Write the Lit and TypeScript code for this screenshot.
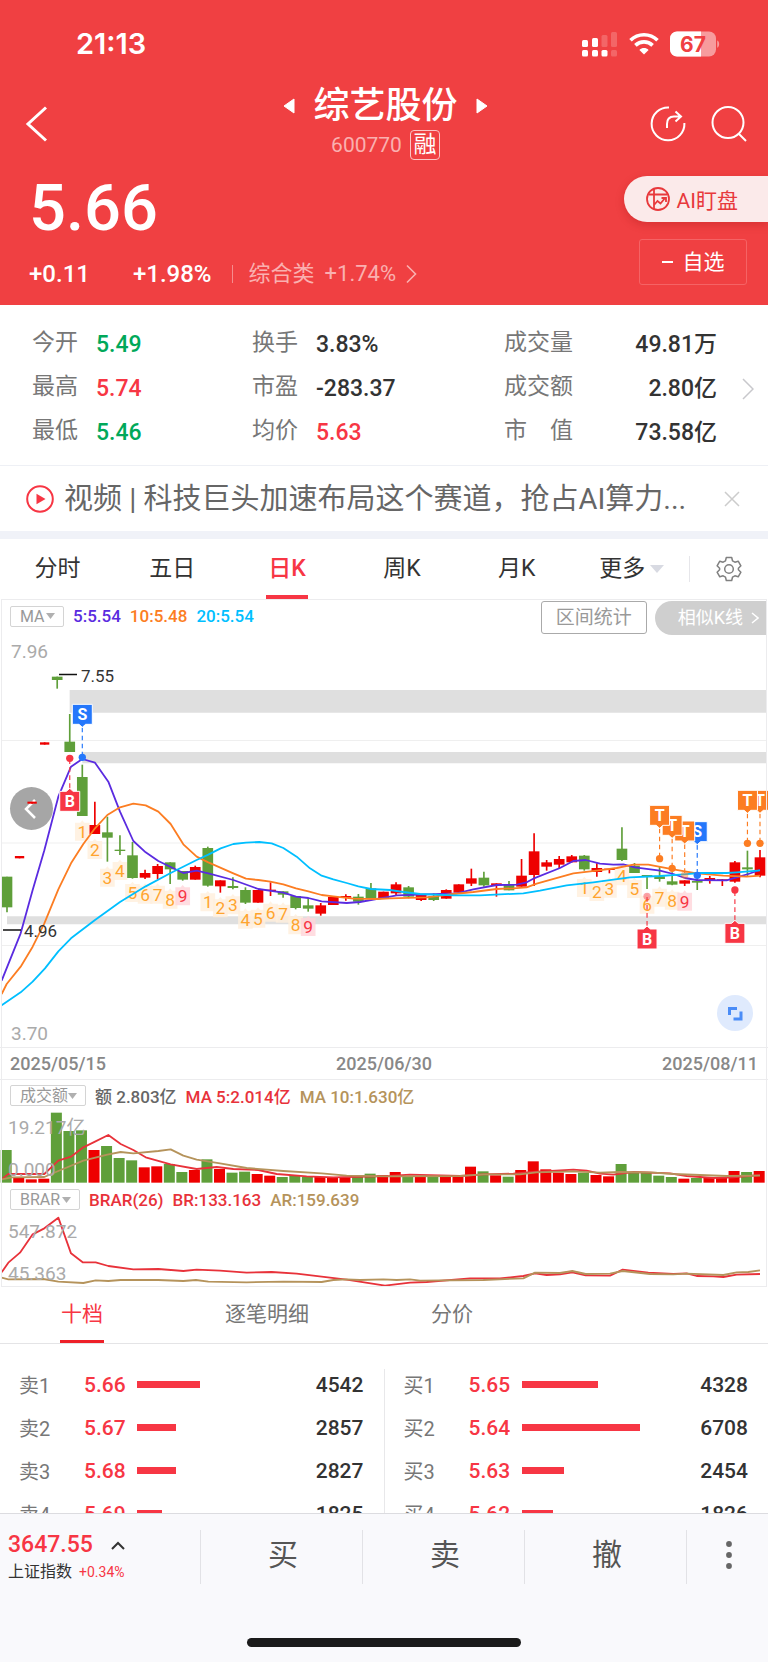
import { LitElement, html, svg, css } from "lit";
import { customElement, state } from "lit/decorators.js";
import { classMap } from "lit/directives/class-map.js";
import { styleMap } from "lit/directives/style-map.js";

type Dir = "r" | "g";
type Candle = [Dir, number, number, number, number];
type Point = [number, number];

/* Plot units are a third of a CSS pixel; candles sit STEP units apart. */
const FIRST = 21;
const STEP = 37.65;
const cx = (i: number) => FIRST + STEP * i;

/* direction, body top, body bottom, high, low */
const CANDLES: Candle[] = [
  ["g", 290, 382, 290, 397], ["r", 228, 235, 228, 235], ["r", 65, 71, 65, 71], ["r", -113, -106, -113, -106],
  ["g", -310, -300, -310, -274], ["g", -115, -84, -198, -84], ["g", -9, 108, -46, 108], ["r", 135, 162, 65, 162],
  ["g", 157, 173, 110, 245], ["g", 209, 213, 166, 225], ["g", 226, 294, 186, 296], ["r", 279, 293, 269, 297],
  ["r", 258, 282, 252, 297], ["g", 247, 268, 247, 312], ["g", 273, 299, 273, 302], ["r", 261, 299, 257, 299],
  ["g", 204, 317, 200, 320], ["r", 301, 319, 301, 338], ["g", 318, 324, 292, 328], ["g", 330, 368, 322, 372],
  ["r", 330, 368, 330, 368], ["r", 329, 333, 307, 348], ["g", 334, 344, 334, 353], ["g", 348, 384, 348, 388],
  ["g", 376, 386, 355, 395], ["r", 376, 401, 369, 407], ["r", 351, 375, 351, 375], ["r", 348, 353, 343, 362],
  ["g", 350, 365, 342, 374], ["g", 325, 354, 309, 354], ["r", 335, 354, 335, 354], ["r", 313, 340, 307, 345],
  ["g", 322, 350, 318, 355], ["r", 344, 360, 342, 363], ["g", 348, 360, 340, 363], ["r", 330, 356, 328, 356],
  ["r", 313, 338, 313, 338], ["r", 295, 311, 266, 318], ["g", 293, 316, 275, 320], ["r", 310, 316, 310, 350],
  ["g", 313, 331, 303, 331], ["r", 287, 320, 237, 320], ["r", 214, 285, 160, 318], ["r", 247, 260, 240, 272],
  ["r", 237, 254, 228, 264], ["r", 229, 247, 225, 247], ["g", 227, 268, 225, 272], ["r", 264, 276, 250, 290],
  ["r", 266, 270, 266, 280], ["g", 206, 240, 142, 243], ["g", 257, 279, 249, 279], ["g", 285, 289, 285, 327],
  ["g", 289, 297, 260, 305], ["g", 304, 314, 277, 316], ["r", 301, 311, 301, 318], ["g", 303, 308, 290, 330],
  ["r", 294, 303, 288, 311], ["r", 298, 302, 298, 318], ["r", 247, 305, 243, 308], ["g", 262, 268, 212, 290],
  ["r", 232, 287, 210, 292],
];

const MA5: Point[] = [[5,602],[62,460],[98,330],[133,211],[175,50],[213,-40],[247,-63],[285,-52],[325,5],[360,95],[400,183],[437,217],[475,243],[512,261],[550,279],[590,272],[625,280],[700,300],[775,327],[850,338],[888,350],[925,354],[965,364],[1040,369],[1080,366],[1170,350],[1190,346],[1280,343],[1370,340],[1420,328],[1490,315],[1550,314],[1580,307],[1600,296],[1680,264],[1720,243],[1757,240],[1800,251],[1840,254],[1870,253],[1905,262],[1980,272],[2020,282],[2055,294],[2090,300],[2180,301],[2210,292],[2245,282],[2280,270]];
const MA10: Point[] = [[5,642],[20,612],[62,560],[98,500],[133,430],[175,328],[213,250],[250,192],[285,145],[322,105],[360,82],[400,71],[437,76],[475,95],[512,132],[550,193],[590,230],[625,247],[700,280],[738,296],[775,300],[811,305],[850,313],[888,325],[925,334],[965,345],[1000,349],[1060,356],[1130,357],[1170,355],[1280,352],[1360,342],[1420,336],[1490,327],[1540,325],[1580,322],[1610,311],[1720,280],[1790,272],[1850,264],[1900,254],[1945,254],[2020,268],[2090,280],[2170,287],[2240,290],[2280,287]];
const MA20: Point[] = [[5,676],[62,637],[98,605],[135,565],[175,514],[213,475],[285,420],[360,366],[437,319],[512,279],[590,240],[625,224],[662,205],[700,192],[738,188],[778,186],[815,190],[850,204],[890,230],[930,265],[965,287],[1000,298],[1040,309],[1075,319],[1113,327],[1170,330],[1210,336],[1260,342],[1360,346],[1440,346],[1570,340],[1620,332],[1700,316],[1780,307],[1840,299],[1890,292],[1980,288],[2050,283],[2100,279],[2180,279],[2210,277],[2280,271]];

/* candle index, count, centre y */
const COUNTS: [number, number, number][] = [
  [6,1,154],[7,2,209],[8,3,292],[9,4,272],[10,5,338],[11,6,343],[12,7,343],[13,8,358],[14,9,348],
  [16,1,366],[17,2,384],[18,3,375],[19,4,418],[20,5,415],[21,6,397],[22,7,400],[23,8,435],[24,9,440],
  [46,1,323],[47,2,335],[48,3,325],[49,4,288],[50,5,326],[51,6,373],[52,7,352],[53,8,361],[54,9,364],
];

/* candle index, letter, tag centre, dot centre */
const MARKS: [number, "B" | "S" | "T", number, number][] = [
  [60,"T",61,190],[59,"T",61,190],[58,"B",460,330],[55,"S",155,286],[54,"T",153,285],[53,"T",136,265],
  [52,"T",106,236],[51,"B",477,349],[6,"S",-197,-68],[5,"B",64,-65],
];
const MARK_COLOR = { B: "#f73644", S: "#2477fb", T: "#fc7d22" };

const VOLUME_TOPS = [240,323,328,326,128,183,181,240,228,264,271,292,289,282,306,300,268,297,308,305,312,317,321,317,321,321,321,322,320,311,315,306,318,319,319,319,320,290,304,316,320,300,274,298,308,312,308,315,319,282,308,308,317,321,326,324,323,321,303,306,303];
const VMA5: Point[] = [[5,328],[25,312],[133,312],[175,272],[213,260],[250,232],[285,215],[325,195],[362,222],[400,240],[437,262],[512,283],[590,297],[650,291],[700,297],[775,300],[830,312],[920,319],[1000,322],[1170,318],[1230,314],[1380,318],[1450,313],[1540,311],[1600,306],[1720,299],[1760,302],[1800,311],[1840,314],[1900,306],[2010,310],[2060,318],[2140,324],[2200,322],[2280,315]];
const VMA10: Point[] = [[5,328],[35,322],[133,321],[175,303],[250,272],[322,254],[362,246],[400,250],[475,243],[512,238],[550,257],[590,269],[660,280],[740,294],[850,303],[965,310],[1040,317],[1170,319],[1380,318],[1450,313],[1560,313],[1610,307],[1720,304],[1800,308],[1860,306],[1950,307],[2020,312],[2180,318],[2280,317]];
const BR: Point[] = [[5,607],[25,578],[60,548],[98,493],[133,475],[175,443],[213,550],[248,577],[287,577],[325,588],[400,598],[475,597],[550,603],[590,599],[660,602],[740,608],[815,606],[890,611],[1040,629],[1155,647],[1230,638],[1280,636],[1410,625],[1500,625],[1570,618],[1605,610],[1640,615],[1680,613],[1717,607],[1757,616],[1830,617],[1868,599],[1945,608],[2020,612],[2060,610],[2090,618],[2140,619],[2170,621],[2210,614],[2280,612]];
const AR: Point[] = [[5,623],[25,628],[130,627],[175,635],[250,639],[287,631],[325,633],[362,630],[475,630],[550,633],[588,630],[625,635],[740,637],[850,635],[965,636],[1000,630],[1040,628],[1080,630],[1150,628],[1190,630],[1230,628],[1260,632],[1450,630],[1570,625],[1605,608],[1680,609],[1717,603],[1757,612],[1830,611],[1868,603],[1950,612],[2020,613],[2060,611],[2170,615],[2210,607],[2245,606],[2280,601]];

const RED = "#ee0000";
const GREEN = "#5f9f3a";
const line = (pts: Point[], color: string) =>
  svg`<polyline points=${pts.map((p) => p.join(",")).join(" ")} fill="none" stroke=${color} stroke-width="5.4" stroke-linejoin="round"/>`;

const base = css`
  :host {
    box-sizing: border-box;
    font-family: Roboto, "Noto Sans CJK SC", sans-serif;
    color: #333;
  }
  *, *::before, *::after { box-sizing: border-box; }
  button, select {
    font: inherit;
    color: inherit;
    background: none;
    border: 0;
    padding: 0;
    margin: 0;
  }
  svg { display: block; flex: none; }
  .num { font-weight: 500; }
  .red { color: #f73644; }
  .green { color: #00a85a; }
`;

@customElement("quote-header")
class QuoteHeader extends LitElement {
  static styles = [base, css`
    :host { display: block; background: #f04042; color: #fff; }
    .status { display: flex; align-items: center; justify-content: space-between; height: 60px; padding: 28px 48px 0 76px; }
    .time { font: 600 29px/32px Inter, sans-serif; }
    .signals { display: flex; align-items: center; gap: 11px; }
    .nav { display: grid; grid-template-columns: 1fr auto 1fr; align-items: end; padding: 26px 21px 0 24px; }
    .side { display: flex; gap: 25px; padding-bottom: 18px; }
    .end { justify-content: flex-end; }
    .name { display: flex; align-items: center; gap: 18px; margin: 0; font-size: 36px; font-weight: 500; line-height: 40px; }
    .center { display: flex; flex-direction: column; align-items: center; gap: 4px; }
    .code { display: flex; align-items: center; gap: 8px; font-size: 21px; line-height: 30px; color: #fab0b0; }
    .tag { width: 30px; height: 30px; border: 1px solid #fbc4c4; border-radius: 4px; color: #fff; font-size: 23px; line-height: 27px; text-align: center; }
    .body { display: flex; justify-content: space-between; padding: 14px 0 17px 29px; }
    .price { font-size: 65px; font-weight: 500; line-height: 68px; }
    .changes { display: flex; align-items: center; margin-top: 18px; font-size: 24px; line-height: 28px; }
    .pct { margin-left: 43px; }
    .sector { display: flex; align-items: center; gap: 10px; margin-left: 20px; padding-left: 17px; color: #fab0b0; font-size: 22px; text-decoration: none; background: linear-gradient(#f68c8d, #f68c8d) left center / 1px 18px no-repeat; }
    .actions { display: flex; flex-direction: column; align-items: flex-end; gap: 17px; padding-top: 2px; }
    .ai { display: flex; align-items: center; gap: 7px; height: 46px; padding: 0 30px 0 22px; border-radius: 23px 0 0 23px; background: #fbeaea; color: #e8393c; font-size: 21px; box-shadow: 0 3px 8px rgba(160, 20, 20, 0.3); }
    .watch { display: flex; align-items: center; justify-content: center; gap: 10px; width: 108px; height: 46px; margin-right: 21px; border: 1px solid #f56365; border-radius: 3px; font-size: 21px; line-height: 40px; }
    .minus { width: 11px; height: 2px; background: #fff; }
  `];

  render() {
    return html`
      <div class="status">
        <div class="time">21:13</div>
        <div class="signals">
          <svg width="36" height="26" viewBox="0 0 36 26" fill="#fff">
            <rect x="0" y="9" width="6" height="7" rx="1.5"/><rect x="10" y="7" width="6" height="9" rx="1.5"/>
            <rect x="19.500" y="4" width="6" height="12" rx="1.5" opacity=".2"/><rect x="29" y="1" width="6" height="15" rx="1.5" opacity=".2"/>
            <rect x="0" y="19" width="6" height="6.500" rx="1.5"/><rect x="10" y="19" width="6" height="6.500" rx="1.5"/>
            <rect x="19.500" y="19" width="6" height="6.500" rx="1.5"/><rect x="29" y="19" width="6" height="6.500" rx="1.5" opacity=".2"/>
          </svg>
          <svg width="30" height="24" viewBox="0 0 30 24" fill="none" stroke="#fff" stroke-width="3.600">
            <path d="M1.500 8.300C9 .8 21 .8 28.500 8.300"/><path d="M6.400 13.400c4.800-4.700 12.400-4.700 17.200 0"/>
            <path d="M10.400 17.900c2.600-2.400 6.600-2.400 9.200 0L15 22.600Z" fill="#fff" stroke="none"/>
          </svg>
          <svg width="50" height="26" viewBox="0 0 50 26">
            <rect x="0" y="0.500" width="46" height="25" rx="7" fill="#f79c9d"/>
            <path d="M7 .5h24v25H7a7 7 0 0 1-7-7v-11a7 7 0 0 1 7-7Z" fill="#fff"/>
            <path d="M47.200 9.500c2.600.8 2.600 6.400 0 7.200Z" fill="#f79c9d"/>
            <text x="23" y="20.500" text-anchor="middle" font-family="Inter, sans-serif" font-weight="700" font-size="21" fill="#f04042">67</text>
          </svg>
        </div>
      </div>
      <div class="nav">
        <div class="side">
          <button aria-label="返回"><svg width="26" height="36" viewBox="0 0 26 36" fill="none" stroke="#fff" stroke-width="3"><path d="M22 1.500 4 18l18 16.500"/></svg></button>
        </div>
        <div class="center">
          <h1 class="name">
            <svg width="12" height="16" viewBox="0 0 12 16"><path d="M11 1v14L1 8Z" fill="#fff" stroke="#fff" stroke-linejoin="round"/></svg>
            综艺股份
            <svg width="12" height="16" viewBox="0 0 12 16"><path d="M1 1v14l10-7Z" fill="#fff" stroke="#fff" stroke-linejoin="round"/></svg>
          </h1>
          <div class="code">600770 <span class="tag">融</span></div>
        </div>
        <div class="side end">
          <button aria-label="分享"><svg width="36" height="36" viewBox="0 0 36 36" fill="none" stroke="#fff" stroke-width="2"><path d="M19 1.500A16.400 16.400 0 1 0 34.400 17"/><path d="M17 22v-4c0-5 3-7.500 7-7.500h6M25.500 5.500l5.500 5-5.500 5"/></svg></button>
          <button aria-label="搜索"><svg width="36" height="36" viewBox="0 0 36 36" fill="none" stroke="#fff" stroke-width="2"><circle cx="17" cy="16.500" r="15.500"/><path d="m28 28 7 7"/></svg></button>
        </div>
      </div>
      <div class="body">
        <div>
          <div class="price">5.66</div>
          <div class="changes">
            <span class="num">+0.11</span><span class="num pct">+1.98%</span>
            <a class="sector" href="#sector">综合类 <span>+1.74%</span>
              <svg width="11" height="20" viewBox="0 0 11 20" fill="none" stroke="#fab0b0" stroke-width="1.600"><path d="m1 1.500 8.500 8.500L1 18.500"/></svg>
            </a>
          </div>
        </div>
        <div class="actions">
          <button class="ai">
            <svg width="24" height="24" viewBox="0 0 24 24" fill="none" stroke="#e8393c" stroke-width="1.800"><circle cx="12" cy="12" r="11"/><path d="M2.500 7.500h19M8 2v20M8 18l3.500-4 3 2.500 5-6M15.500 11h4.500v4"/></svg>
            AI盯盘
          </button>
          <button class="watch"><i class="minus"></i>自选</button>
        </div>
      </div>`;
  }
}

@customElement("quote-stats")
class QuoteStats extends LitElement {
  static styles = [base, css`
    :host { display: block; }
    .stats { display: flex; align-items: center; padding: 18px 14px 10px 32px; border-bottom: 1px solid #eef0f5; }
    .grid { flex: 1; display: grid; grid-template-columns: 220fr 252fr 213fr; grid-auto-rows: 44px; margin: 0; }
    .item { display: flex; gap: 18px; height: 44px; font-size: 23px; line-height: 44px; }
    .item:nth-child(3n) { justify-content: space-between; }
    dt { height: 40px; line-height: 40px; color: #777; white-space: pre; }
    dd { margin: 0; font-weight: 500; }
    .more { margin-left: 25px; }
    .news { display: flex; align-items: center; height: 65px; padding: 0 28px 0 26px; }
    .headline { flex: 1; min-width: 0; margin: 0 30px 0 10px; overflow: hidden; white-space: nowrap; text-overflow: ellipsis; color: #666; font-size: 29px; line-height: 64px; text-decoration: none; }
    .band { height: 8px; background: #f0f2f8; }
  `];

  rows: [string, string, string][] = [
    ["今开", "5.49", "green"], ["换手", "3.83%", ""], ["成交量", "49.81万", ""],
    ["最高", "5.74", "red"], ["市盈", "-283.37", ""], ["成交额", "2.80亿", ""],
    ["最低", "5.46", "green"], ["均价", "5.63", "red"], ["市　值", "73.58亿", ""],
  ];

  render() {
    return html`
      <div class="stats">
        <dl class="grid">
          ${this.rows.map(([k, v, c]) => html`<div class="item"><dt>${k}</dt><dd class=${c}>${v}</dd></div>`)}
        </dl>
        <button class="more" aria-label="更多指标"><svg width="12" height="22" viewBox="0 0 12 22" fill="none" stroke="#c8c8cc" stroke-width="1.500"><path d="m1 1 10 10L1 21"/></svg></button>
      </div>
      <div class="news">
        <svg width="28" height="28" viewBox="0 0 28 28"><circle cx="14" cy="14" r="12.800" fill="none" stroke="#f73644" stroke-width="2"/><path d="M10.500 8.800v10.400l9-5.200Z" fill="#f73644"/></svg>
        <a class="headline" href="#news">视频 | 科技巨头加速布局这个赛道，抢占AI算力...</a>
        <button aria-label="关闭"><svg width="16" height="16" viewBox="0 0 16 16" stroke="#ccc" stroke-width="1.500"><path d="m1 1 14 14M15 1 1 15"/></svg></button>
      </div>
      <div class="band"></div>`;
  }
}

@customElement("kline-panel")
class KlinePanel extends LitElement {
  static styles = [base, css`
    :host { display: block; }
    .tabs { display: flex; align-items: center; height: 60px; font-size: 23px; }
    .period { flex: 115; height: 60px; }
    .label { display: inline-block; height: 60px; line-height: 60px; padding: 0 2px; border-bottom: 4px solid transparent; }
    .on .label { color: #f73644; border-color: #f73644; font-weight: 500; }
    .extra { flex: 115; display: flex; align-items: center; justify-content: center; gap: 5px; height: 60px; line-height: 60px; }
    .gear { flex: 78; display: flex; justify-content: center; border-left: 1px solid #e6e6ea; }
    .chart { position: relative; }
    .chart::after { content: ""; position: absolute; inset: 0 1px; border: 1px solid #ececee; pointer-events: none; }
    .bar { display: flex; align-items: flex-start; justify-content: space-between; height: 37px; padding: 1px 1px 0 10px; }
    .legend { display: flex; align-items: center; gap: 9px; height: 32px; font-size: 17px; font-weight: 500; white-space: nowrap; }
    .pick { height: 21px; padding: 0 0 0 9px; border: 1px solid #d4d4d4; border-radius: 2px; appearance: none; color: #999; font-size: 16px; font-weight: 400; line-height: 19px; background: url("data:image/svg+xml,%3Csvg xmlns='http://www.w3.org/2000/svg' width='9' height='6'%3E%3Cpath d='M0 0h9L4.500 6z' fill='%23b0b0b0'/%3E%3C/svg%3E") right 8px center no-repeat; }
    .w1 { width: 54px; }
    .w2 { width: 76px; }
    .w3 { width: 70px; }
    .c5 { color: #5a2be0; }
    .c10 { color: #fc7d22; }
    .c20 { color: #00bfff; }
    .cr { color: #e8323a; }
    .ct { color: #b5935b; }
    .cg { color: #666; }
    .tools { display: flex; gap: 8px; padding-top: 1px; }
    .range { height: 33px; padding: 0 14px; border: 1px solid #aaa; border-radius: 3px; color: #999; font-size: 19px; line-height: 28px; }
    .similar { display: flex; align-items: center; gap: 8px; height: 34px; padding: 0 8px 0 23px; border-radius: 17px 0 0 17px; background: #cfcfcf; color: #fff; font-size: 18px; line-height: 30px; }
    .plot { position: relative; }
    .plot svg { position: relative; width: 100%; height: auto; pointer-events: none; }
    .prev { position: absolute; left: 10px; top: 151px; width: 43px; height: 43px; border-radius: 50%; background: #a6a6a6; }
    .prev svg { width: 43px; }
    .full { position: absolute; right: 15px; bottom: 16px; width: 36px; height: 36px; border-radius: 50%; background: #dfeafd; }
    .full svg { width: 36px; }
    .dates { display: flex; justify-content: space-between; height: 33px; padding: 0 10px; border-top: 1px solid #ececee; border-bottom: 1px solid #ececee; color: #888; font-size: 18px; font-weight: 500; line-height: 31px; }
    .sub { height: 31px; padding-top: 0; }
    .sub .legend { height: 31px; }
    .low { height: 29px; }
    .low .legend { height: 33px; }
  `];

  @state() period = "日K";

  caret = html`<svg width="14" height="8" viewBox="0 0 14 8"><path d="M0 0h14L7 8Z" fill="#d8dae2"/></svg>`;

  candle([dir, top, bottom, high, low]: Candle, i: number) {
    const c = dir === "r" ? RED : GREEN;
    const w = i > 0 && i < 4 ? 28 : 32;
    return svg`<path d=${`M${cx(i)} ${high}V${low}`} stroke=${c} stroke-width="5"/>
      <rect x=${cx(i) - w / 2} y=${top} width=${w} height=${bottom - top} fill=${c}/>`;
  }

  count([i, n, y]: [number, number, number]) {
    const last = n === 9;
    return svg`<path d=${`M${cx(i) - 22} ${y - 26}h16l6-7 6 7h16v54h-44Z`} fill=${last ? "#ffd5da" : "#ffefdc"} opacity=".8"/>
      <text x=${cx(i)} y=${y + 19} text-anchor="middle" font-size="52" fill=${last ? "#f73644" : "#ffa42e"}>${n}</text>`;
  }

  mark([i, letter, y, dot]: [number, "B" | "S" | "T", number, number]) {
    const c = MARK_COLOR[letter];
    const x = cx(i);
    const up = letter === "B";
    const edge = up ? y - 40 : y + 40;
    return svg`<path d=${`M${x} ${edge}V${dot}`} stroke=${c} stroke-width="3.5" stroke-dasharray="14 10"/>
      <circle cx=${x} cy=${dot} r="11" fill=${c} opacity=${i === 51 || i === 54 ? 0.45 : 1}/>
      <path d=${up ? `M${x - 30} ${y - 30}h20l10-9 10 9h20v60h-60Z` : `M${x - 30} ${y - 30}h60v60h-20l-10 9-10-9h-20Z`} fill=${c} stroke="#fff" stroke-width="3"/>
      <text x=${x} y=${y + 17} text-anchor="middle" font-size="48" font-weight="700" fill="#fff">${letter}</text>`;
  }

  render() {
    return html`
      <nav class="tabs">
        ${["分时", "五日", "日K", "周K", "月K"].map((p) => html`
          <button class=${classMap({ period: true, on: p === this.period })} @click=${() => (this.period = p)}><span class="label">${p}</span></button>`)}
        <button class="extra">更多 ${this.caret}</button>
        <button class="gear" aria-label="设置">
          <svg width="26" height="26" viewBox="0 0 26 26" fill="none" stroke="#808080" stroke-width="1.500" stroke-linejoin="round"><path d="M10.300 1.500h5.400l.8 3.300 2.400 1.400 3.300-1 2.700 4.600-2.500 2.400v1.600l2.500 2.400-2.700 4.600-3.300-1-2.400 1.400-.8 3.300h-5.400l-.8-3.300-2.400-1.400-3.300 1-2.700-4.600 2.500-2.400v-1.600L1.100 9.800l2.700-4.600 3.300 1 2.400-1.400Z"/><circle cx="13" cy="13" r="4.300"/></svg>
        </button>
      </nav>
      <div class="chart">
        <div class="bar">
          <div class="legend">
            <select class="pick w1" aria-label="主图指标"><option>MA</option></select>
            <span class="c5">5:5.54</span><span class="c10">10:5.48</span><span class="c20">20:5.54</span>
          </div>
          <div class="tools">
            <button class="range">区间统计</button>
            <button class="similar">相似K线 <svg width="8" height="12" viewBox="0 0 8 12" fill="none" stroke="#fff" stroke-width="1.500"><path d="m1 1 6 5-6 5"/></svg></button>
          </div>
        </div>
        <div class="plot">
          <button class="prev" aria-label="更早"><svg viewBox="0 0 43 43" fill="none" stroke="#fff" stroke-width="2.500"><path d="m25 13-9 9 9 9"/></svg></button>
          <svg viewBox="0 0 768 411" role="img" aria-label="日K线图">
            <path d="M2 104.500h764M2 207h764M2 309.500h764" stroke="#efefef"/>
            <g transform="translate(0 144) scale(0.33333)">
              <path d="M209-270H2301v68H209ZM247-84H2301v34H247ZM21 409H2301v24H21Z" fill="#dfdfdf"/>
              ${COUNTS.map((c) => this.count(c))}
              ${CANDLES.map((c, i) => this.candle(c, i))}
              ${line(MA5, "#5a2be0")}${line(MA10, "#fc7d22")}${line(MA20, "#00bfff")}
              ${MARKS.map((m) => this.mark(m))}
            </g>
            <path d="M59 38.500h18M3 294h18" stroke="#111" stroke-width="1.500"/>
            <g font-size="17" fill="#333"><text x="81" y="46">7.55</text><text x="24" y="301">4.96</text></g>
            <g font-size="19" fill="#aaa"><text x="11" y="22">7.96</text><text x="11" y="404">3.70</text></g>
          </svg>
          <button class="full" aria-label="全屏"><svg viewBox="0 0 36 36" fill="none" stroke="#4a8cf7" stroke-width="3"><path d="M12.500 20v-6.500H20M24 16.500V24h-7.500"/></svg></button>
        </div>
        <div class="dates"><span>2025/05/15</span><span>2025/06/30</span><span>2025/08/11</span></div>
        <div class="bar sub">
          <div class="legend">
            <select class="pick w2" aria-label="副图一指标"><option>成交额</option></select>
            <span class="cg">额 2.803亿</span><span class="cr">MA 5:2.014亿</span><span class="ct">MA 10:1.630亿</span>
          </div>
        </div>
        <div class="plot">
          <svg viewBox="0 0 768 72" role="img" aria-label="成交额">
            <g transform="translate(0 -41) scale(0.33333)">
              ${VOLUME_TOPS.map((t, i) => svg`<rect x=${cx(i) - 19} y=${t} width="33" height=${338 - t} fill=${CANDLES[i][0] === "r" ? RED : GREEN}/>`)}
              ${line(VMA5, "#e8323a")}${line(VMA10, "#b5935b")}
            </g>
            <g font-size="19" fill="#aaa"><text x="8" y="23">19.217亿</text><text x="8" y="65">0.000</text></g>
          </svg>
        </div>
        <div class="bar sub low">
          <div class="legend">
            <select class="pick w3" aria-label="副图二指标"><option>BRAR</option></select>
            <span class="cr">BRAR(26)</span><span class="cr">BR:133.163</span><span class="ct">AR:159.639</span>
          </div>
        </div>
        <div class="plot">
          <svg viewBox="0 0 768 75" role="img" aria-label="BRAR">
            <g transform="translate(0 -142) scale(0.33333)">${line(BR, "#e8323a")}${line(AR, "#b5935b")}</g>
            <g font-size="19" fill="#aaa"><text x="8" y="26">547.872</text><text x="8" y="68">45.363</text></g>
          </svg>
        </div>
      </div>`;
  }
}

type Level = [string, string, number, string];

@customElement("order-book")
class OrderBook extends LitElement {
  static styles = [base, css`
    :host { display: block; }
    .tabs { display: flex; gap: 120px; height: 57px; padding-left: 60px; border-bottom: 1px solid #e4e4e6; }
    .tab { padding: 0 1px; border-bottom: 3px solid transparent; color: #777; font-size: 21px; line-height: 52px; }
    .on { color: #f73644; border-color: #ee2028; }
    .book { display: grid; grid-template-columns: 1fr 1px 1fr; padding-top: 19px; }
    .rule { margin-top: 6px; background: #e8e8ea; }
    .side { padding: 0 20px 0 19px; }
    table { width: 100%; table-layout: fixed; border-collapse: collapse; font-size: 21px; }
    th { width: 65px; padding: 0; font-size: 20px; font-weight: 400; text-align: left; color: #777; }
    td { height: 43px; padding: 0; font-weight: 500; }
    .price { width: 53px; color: #f73644; }
    .size { width: 70px; text-align: right; }
    .fill { display: block; height: 7px; background: #f73644; }
  `];

  @state() tab = "十档";

  asks: Level[] = [["卖1", "5.66", 40, "4542"], ["卖2", "5.67", 25, "2857"], ["卖3", "5.68", 25, "2827"], ["卖4", "5.69", 16, "1825"]];
  bids: Level[] = [["买1", "5.65", 49, "4328"], ["买2", "5.64", 76, "6708"], ["买3", "5.63", 27, "2454"], ["买4", "5.62", 20, "1826"]];

  side(levels: Level[]) {
    return html`<div class="side"><table>
      ${levels.map(([name, price, share, size]) => html`<tr>
        <th scope="row">${name}</th><td class="price">${price}</td>
        <td><span class="fill" style=${styleMap({ width: `${share}%` })}></span></td><td class="size">${size}</td>
      </tr>`)}
    </table></div>`;
  }

  render() {
    return html`
      <nav class="tabs">
        ${["十档", "逐笔明细", "分价"].map((t) => html`<button class=${classMap({ tab: true, on: t === this.tab })} @click=${() => (this.tab = t)}>${t}</button>`)}
      </nav>
      <div class="book">${this.side(this.asks)}<div class="rule"></div>${this.side(this.bids)}</div>`;
  }
}

@customElement("trade-bar")
class TradeBar extends LitElement {
  static styles = [base, css`
    :host { display: block; background: #f9f9fc; border-top: 1px solid #dcdce0; padding: 16px 0 15px; }
    .cells { display: grid; grid-template-columns: 200fr 162fr 162fr 162fr 82fr; height: 54px; }
    .cell { display: flex; align-items: center; justify-content: center; border-left: 1px solid #e2e2e6; color: #555; font-size: 30px; line-height: 50px; padding: 0 0 4px 3px; }
    .index { display: flex; flex-direction: column; align-items: flex-start; padding-left: 8px; }
    .top { display: flex; align-items: center; gap: 18px; font-size: 23px; font-weight: 500; line-height: 30px; }
    .bottom { display: flex; gap: 7px; font-size: 16px; line-height: 24px; }
    .delta { font-size: 14px; }
    .home { width: 274px; height: 9px; margin: 54px auto 0; border-radius: 5px; background: #1b1b1b; }
  `];

  render() {
    return html`
      <div class="cells">
        <button class="index">
          <span class="top"><span class="red">3647.55</span><svg width="14" height="9" viewBox="0 0 14 9" fill="none" stroke="#333" stroke-width="2"><path d="m1 8 6-6 6 6"/></svg></span>
          <span class="bottom"><span>上证指数</span><span class="red delta">+0.34%</span></span>
        </button>
        <button class="cell">买</button><button class="cell">卖</button><button class="cell">撤</button>
        <button class="cell" aria-label="更多"><svg width="6" height="28" viewBox="0 0 6 28" fill="#666"><circle cx="3" cy="3" r="2.900"/><circle cx="3" cy="14" r="2.900"/><circle cx="3" cy="25" r="2.900"/></svg></button>
      </div>
      <div class="home"></div>`;
  }
}

@customElement("app-root")
class AppRoot extends LitElement {
  static styles = css`
    :host { display: flex; flex-direction: column; height: 100vh; background: #fff; }
    main { flex: 1; min-height: 0; overflow-y: auto; scrollbar-width: none; }
  `;

  render() {
    return html`
      <quote-header></quote-header>
      <main>
        <quote-stats></quote-stats>
        <kline-panel></kline-panel>
        <order-book></order-book>
      </main>
      <trade-bar></trade-bar>`;
  }
}
